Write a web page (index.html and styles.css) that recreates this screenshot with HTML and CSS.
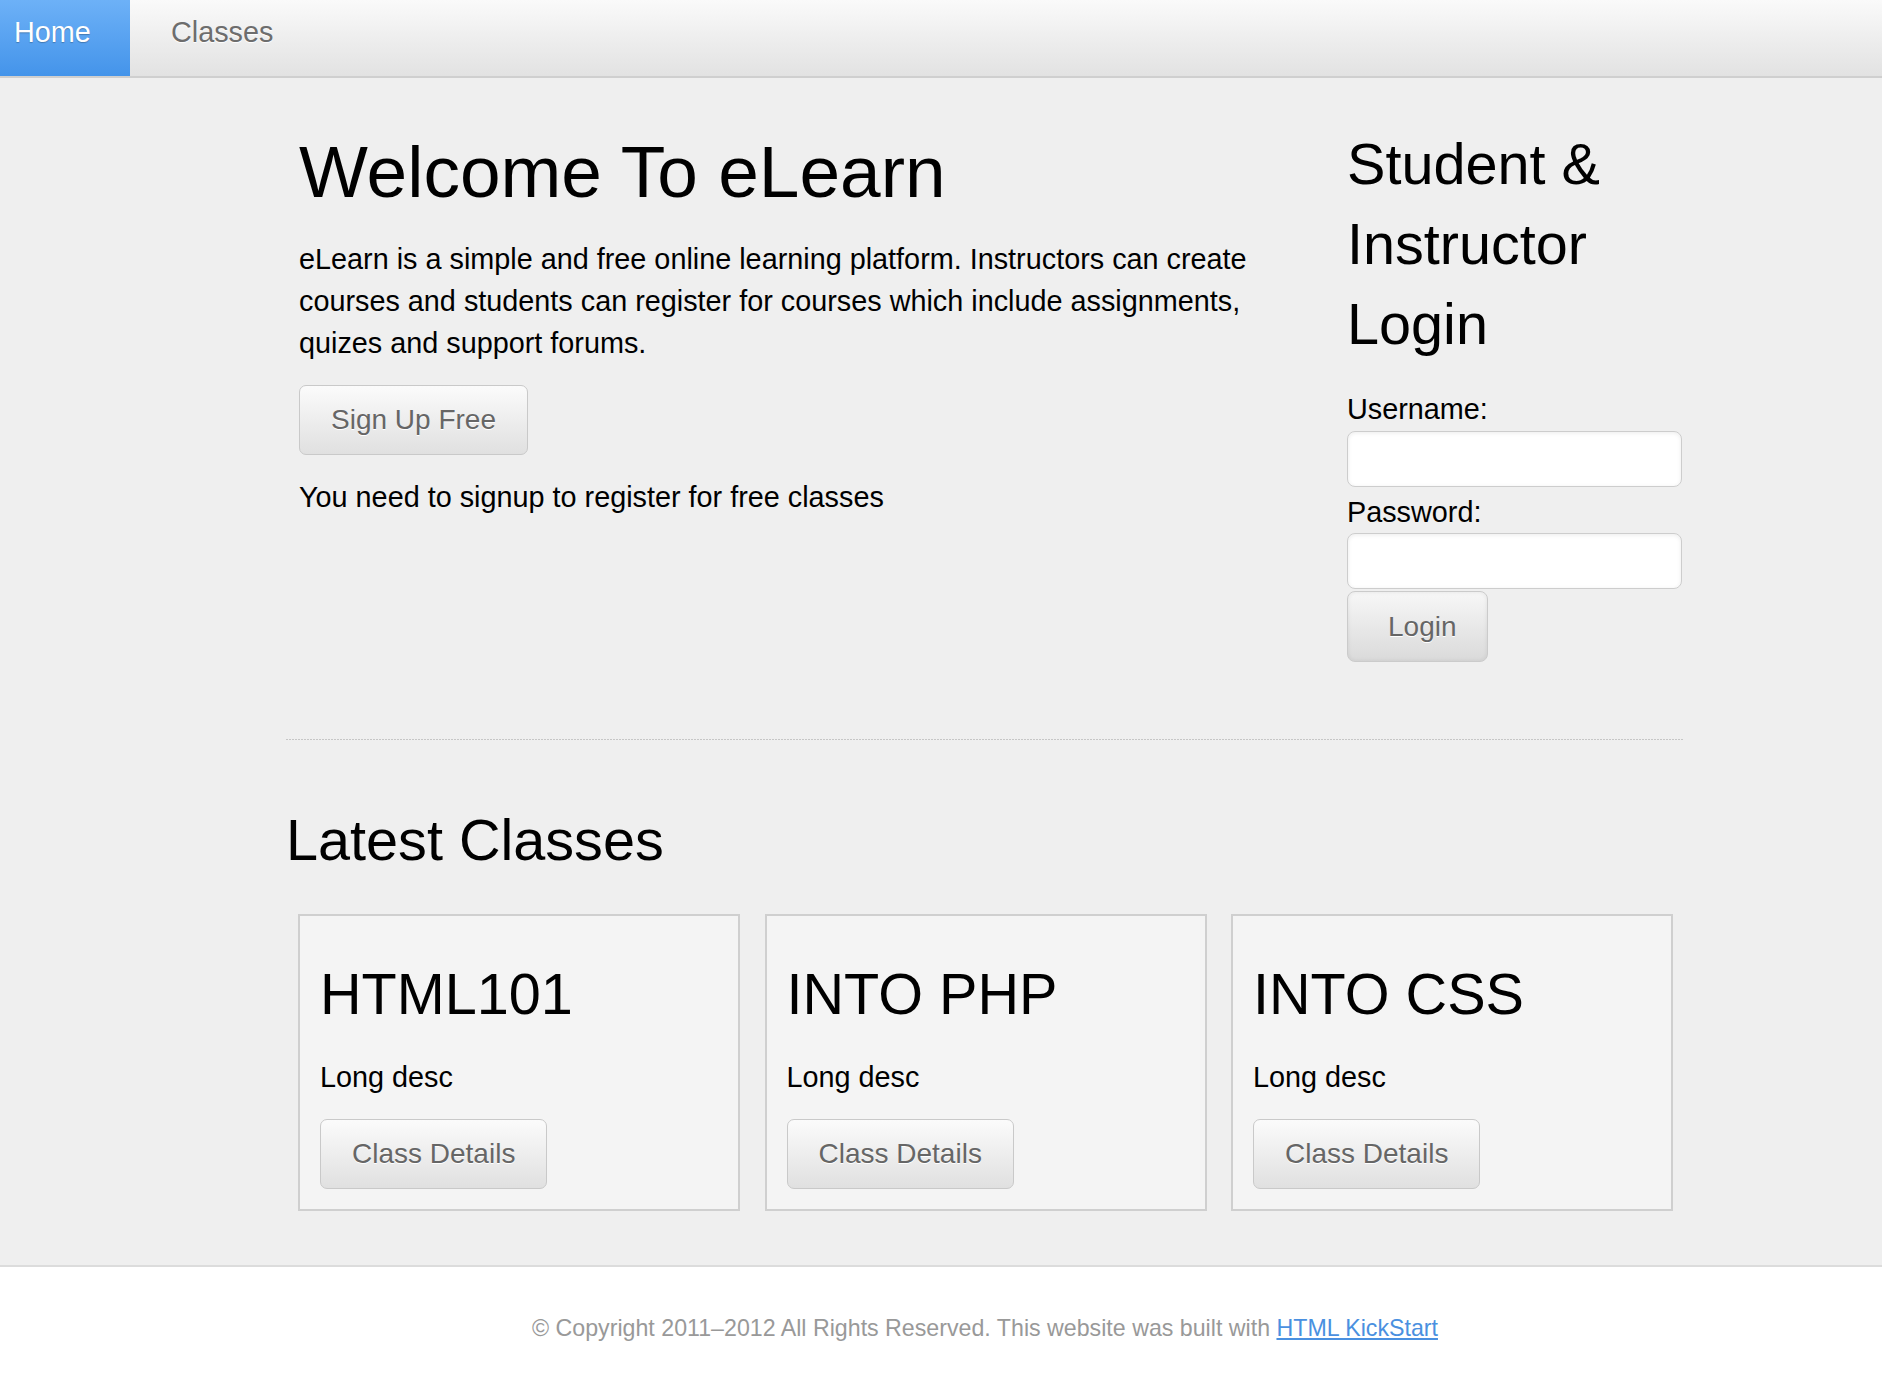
FILE: index.html
```html
<!DOCTYPE html>
<html lang="en">
<head>
<meta charset="utf-8">
<title>eLearn</title>
<link rel="stylesheet" href="styles.css">
</head>
<body>
<nav class="topnav">
  <a class="nav-item nav-active" href="#">Home</a>
  <a class="nav-item" href="#">Classes</a>
</nav>
<main class="container">
  <div class="top-row">
    <section class="welcome">
      <h1 class="welcome-title">Welcome To eLearn</h1>
      <p class="lead">eLearn is a simple and free online learning platform. Instructors can create courses and students can register for courses which include assignments, quizes and support forums.</p>
      <a class="btn" href="#">Sign Up Free</a>
      <p class="note">You need to signup to register for free classes</p>
    </section>
    <aside class="login">
      <h2 class="login-title">Student &amp; Instructor Login</h2>
      <form class="login-form">
        <label class="field-label first">Username:</label>
        <input class="field-input first-input" type="text">
        <label class="field-label">Password:</label>
        <input class="field-input" type="password">
        <button class="btn-login" type="button">Login</button>
      </form>
    </aside>
  </div>
  <div class="divider"></div>
  <h2 class="section-title">Latest Classes</h2>
  <div class="cards">
    <div class="card">
      <h2 class="card-title">HTML101</h2>
      <p class="card-desc">Long desc</p>
      <a class="btn" href="#">Class Details</a>
    </div>
    <div class="card">
      <h2 class="card-title">INTO PHP</h2>
      <p class="card-desc">Long desc</p>
      <a class="btn" href="#">Class Details</a>
    </div>
    <div class="card">
      <h2 class="card-title">INTO CSS</h2>
      <p class="card-desc">Long desc</p>
      <a class="btn" href="#">Class Details</a>
    </div>
  </div>
</main>
<footer class="footer">
  <div class="footer-inner">© Copyright 2011–2012 All Rights Reserved. This website was built with <a class="footer-link" href="#">HTML KickStart</a></div>
</footer>
</body>
</html>
```
FILE: styles.css
```css
* { box-sizing: border-box; }
html, body { margin: 0; padding: 0; }
body {
  background: #efefef;
  font-family: "Liberation Sans", Arial, sans-serif;
  color: #000;
  font-size: 28.8px;
  line-height: 42px;
}

/* nav */
.topnav {
  display: flex;
  height: 78px;
  background: linear-gradient(#fafafa, #e2e2e2);
  border-bottom: 2px solid #cfcfcf;
}
.nav-item {
  display: block;
  padding: 11px 40px 23px 41px;
  font-size: 28.8px;
  line-height: 42px;
  color: #6d6d6d;
  text-decoration: none;
  text-shadow: 0 1px 1px #fff;
}
.nav-active {
  padding-left: 14px;
  padding-right: 0;
  width: 130px;
  color: #fff;
  background: linear-gradient(#6db1f7, #4494ea);
  text-shadow: 0 1px 1px rgba(0,0,0,0.25);
}

/* main */
.container {
  width: 1398px;
  margin-left: 286px;
}
.top-row {
  display: grid;
  grid-template-columns: 990px 335px;
  column-gap: 58px;
  padding-left: 13px;
  align-items: start;
}
.welcome-title {
  margin: 54px 0 0;
  font-size: 73px;
  line-height: 80px;
  font-weight: normal;
}
.lead {
  margin: 26px 0 0;
}
.note {
  margin: 21px 0 0;
}
.btn {
  display: inline-block;
  margin-top: 21px;
  padding: 14px 31px;
  line-height: 40px;
  font-size: 28px;
  color: #666;
  text-decoration: none;
  text-shadow: 0 1px 0 #fff;
  background: linear-gradient(#fbfbfb, #e0e0e0);
  border: 1px solid #c9c9c9;
  border-radius: 7px;
}

.login-title {
  margin: 46px 0 0;
  font-size: 57.6px;
  line-height: 80px;
  font-weight: normal;
}
.login-form {
  display: flex;
  flex-direction: column;
  align-items: flex-start;
}
.field-label {
  display: block;
  margin-top: 4px;
  font-size: 28.8px;
  line-height: 42px;
}
.field-label.first { margin-top: 24px; }
.field-input {
  display: block;
  width: 335px;
  height: 56px;
  margin: 0;
  background: #fff;
  border: 1px solid #cdcdcd;
  border-radius: 8px;
  box-shadow: inset 0 1px 4px rgba(0,0,0,0.08);
}
.first-input { margin-top: 1px; }
.btn-login {
  margin-top: 2px;
  width: 141px;
  height: 71px;
  padding: 0 20px 0 40px;
  text-align: left;
  font-family: "Liberation Sans", Arial, sans-serif;
  font-size: 28px;
  line-height: 41px;
  color: #666;
  text-shadow: 0 1px 0 #fff;
  background: linear-gradient(#f7f7f7, #dadada);
  border: 1px solid #cbcbcb;
  border-radius: 8px;
  box-shadow: inset 0 0 4px rgba(0,0,0,0.08);
}

.divider {
  margin: 77px 0 0;
  height: 1px;
  background: repeating-linear-gradient(to right, #c6c6c6 0 2px, transparent 2px 3px);
}
.section-title {
  margin: 60px 0 0;
  font-size: 57.6px;
  line-height: 80px;
  font-weight: normal;
}
.cards {
  display: grid;
  grid-template-columns: repeat(3, 442px);
  column-gap: 24.5px;
  margin: 34px 0 0 12px;
}
.card {
  background: #f4f4f4;
  border: 2px solid #cfcfcf;
  padding: 20px;
}
.card-title {
  margin: 18px 0 0;
  font-size: 57.6px;
  line-height: 80px;
  font-weight: normal;
}
.card-desc {
  margin: 22px 0 0;
}

/* footer */
.footer {
  margin-top: 54px;
  background: #fff;
  border-top: 2px solid #dcdcdc;
  padding: 46px 0 31px;
}
.footer-inner {
  width: 1398px;
  margin-left: 286px;
  text-align: center;
  font-size: 23.2px;
  line-height: 30px;
  color: #999;
}
.footer-link {
  color: #4a90e0;
  text-decoration: underline;
}
```
